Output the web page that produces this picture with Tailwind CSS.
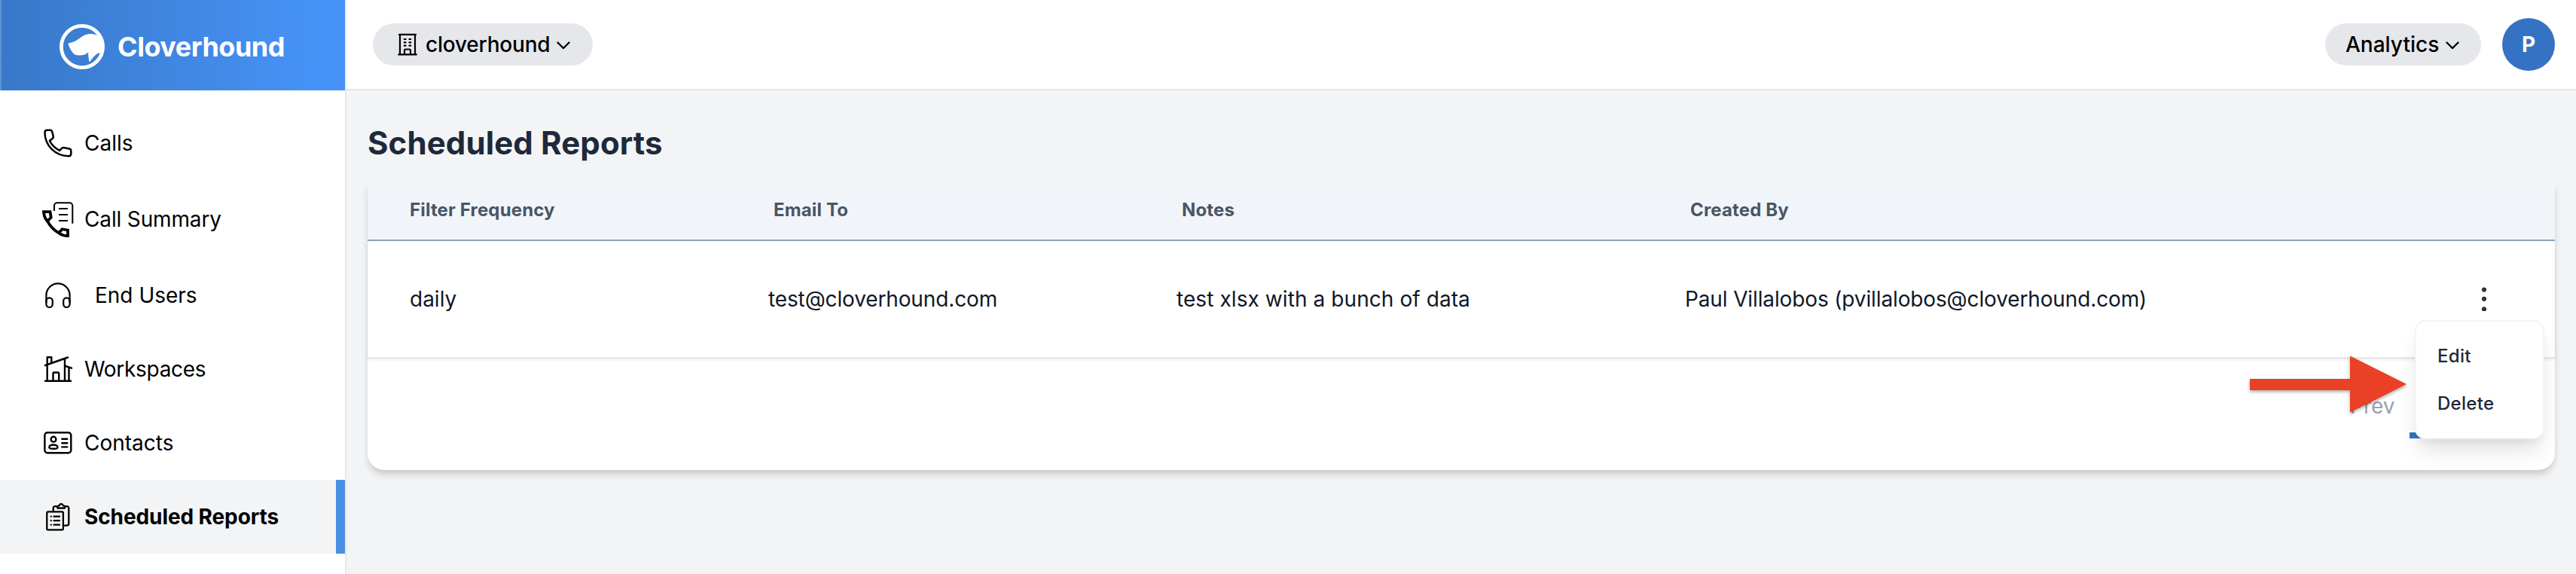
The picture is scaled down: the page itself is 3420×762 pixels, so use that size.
<!DOCTYPE html>
<html lang="en">
<head>
    <meta charset="UTF-8">
    <meta name="viewport" content="width=device-width, initial-scale=1.0">
    <title>Scheduled Reports - Cloverhound</title>
    <script src="https://cdn.jsdelivr.net/npm/@tailwindcss/browser@4"></script>
</head>
<body class="bg-gray-100 font-['Inter',sans-serif] text-black">

    <div class="flex h-[762px] overflow-hidden">

        <!-- Sidebar -->
        <aside class="w-[460px] shrink-0 bg-white border-r-2 border-gray-200">
            <div class="h-[120px] flex items-center pt-1 pl-[77px] gap-[17px] border-l-2 border-[#5c93d6] bg-linear-to-r from-[#3878c8] to-[#4692f6] to-90%">
                <svg class="w-[60px] h-[60px] shrink-0" viewBox="0 0 60 60" fill="none">
                    <circle cx="30" cy="30" r="27.6" stroke="#fff" stroke-width="4.8" />
                    <path fill="#fff" d="M11.700 26.500c-.2-1 .5-1.500 1.800-1.600C22 24 27 17.500 33 14.800c6-2.600 14-2.300 19 1.200l5 14-2.700 8c-4.800.6-8.800 4.500-12.800 10.500-1 1.500-2 2-2.200.5-.6-4-1.400-8-1.100-11.700-3 3.300-7 4.300-12 4.300-4.500 0-7-1.400-9.200-4.300C14.500 34 13 30.500 11.700 26.500z" />
                </svg>
                <span class="text-4xl font-bold tracking-[-0.5px] text-white">Cloverhound</span>
            </div>

            <nav class="pt-[21px] text-[28px]">
                <a class="flex items-center h-[98px] pl-[57px] gap-[15px]">
                    <svg class="w-10 h-10 shrink-0" fill="none" stroke="currentColor" stroke-width="2.500" viewBox="0 0 40 40">
                        <path stroke-linejoin="round" d="M5.500 2.700h4.200c1.300 0 2.200.7 2.500 2l1.500 6c.4 1.400 0 2.500-1 3.300l-3.800 2.800c2.600 5.600 7 10 13.200 13.100l2.600-2.800c.8-1 1.800-1.400 3.100-1.100l7.300 1.500c1.400.3 2.200 1.200 2.200 2.600v4.200c0 1.800-1.100 2.900-2.900 2.900C16.500 37.200 2.500 23.500 2.500 5.800c0-1.800 1.200-3.100 3-3.100z" />
                    </svg>
                    <span>Calls</span>
                </a>
                <a class="flex items-center h-[104px] pl-[57px] gap-[15px]">
                    <svg class="w-10 h-10 shrink-0 overflow-visible" fill="none" stroke="currentColor" stroke-width="2" viewBox="0 0 40 40">
                        <path d="M15 9V2.300a4 4 0 0 1 4-4h16.300a4 4 0 0 1 4 4v23.400M21 6h12M21 14h12M21 22h12" />
                        <path stroke-width="3.800" d="M1 10.200h8.500l1.200 7.500-4.700 5C3 19.500 1.200 15 1 10.200zM6 22.700c3.500 6.500 8.500 12 15 15.500M21 38.200l4.500-5 7.500 1.300v7.700c-4.500 0-8.500-1.500-12-4z" />
                    </svg>
                    <span class="tracking-[-0.15px]">Call Summary</span>
                </a>
                <a class="flex items-center h-[98px] pl-[57px] gap-[29px]">
                    <svg class="w-10 h-10 shrink-0" fill="none" stroke="currentColor" stroke-width="2.200" viewBox="0 0 40 40">
                        <path d="M4.400 30V20a15.600 15.600 0 0 1 31.200 0v10" />
                        <rect x="4.400" y="23.400" width="8.400" height="12.600" rx="4.200" />
                        <rect x="27.200" y="23.400" width="8.400" height="12.600" rx="4.200" />
                    </svg>
                    <span>End Users</span>
                </a>
                <a class="flex items-center h-[98px] pl-[57px] gap-[15px]">
                    <svg class="w-10 h-10 shrink-0" fill="none" stroke="currentColor" stroke-width="2.400" stroke-linecap="round" stroke-linejoin="round" viewBox="0 0 40 40">
                        <path d="M3 15L33 4.500M5.700 14V4.300h5.600v7.500M5.700 14v21.700M29 6v29.700M30 16l8 2.700M34.500 18v17.700M3 35.700h34M13.500 35.700V26a1.500 1.500 0 0 1 1.500-1.500h4.700a1.500 1.500 0 0 1 1.500 1.500v9.700" />
                    </svg>
                    <span class="tracking-[-0.3px]">Workspaces</span>
                </a>
                <a class="flex items-center h-[98px] pl-[57px] gap-[15px]">
                    <svg class="w-10 h-10 shrink-0" fill="none" stroke="currentColor" stroke-width="2.400" stroke-linecap="round" viewBox="0 0 40 40">
                        <rect x="2.400" y="6.300" width="34.900" height="27" rx="3.500" />
                        <circle cx="14" cy="15.200" r="3.400" />
                        <path d="M8.300 26c0-2.200 2.500-3.500 5.600-3.500s5.600 1.300 5.600 3.500c0 1.300-2.500 1.800-5.600 1.800S8.300 27.300 8.300 26zM25.300 14.700h7M25.300 20.200h7M25.300 25.400h7" />
                    </svg>
                    <span>Contacts</span>
                </a>
                <a class="flex items-center h-[98px] pl-[57px] gap-[15px] bg-gray-100 border-r-12 border-[#4a90e2]">
                    <svg class="w-10 h-10 shrink-0" fill="none" stroke="currentColor" stroke-width="2.300" stroke-linecap="round" stroke-linejoin="round" viewBox="0 0 40 40">
                        <rect x="5.300" y="13.300" width="21.600" height="24" rx="1.500" />
                        <path d="M13.700 13V8.700a2.600 2.600 0 0 1 2.600-2.600h3M29 6.100h2.700a2.600 2.600 0 0 1 2.600 2.600v20.400a2.600 2.600 0 0 1-2.600 2.600H27" />
                        <path d="M19.400 8.500c-.5-2.300.5-3.300 2.200-3.400.6-1.500 1.400-2.100 2.600-2.100s2 .6 2.600 2.100c1.700.1 2.700 1.100 2.200 3.400z" />
                        <path d="M10.700 19.700h.1M10.700 25.200h.1M10.700 30.700h.1M14.500 19.700h7.500M14.500 25.200h7.500M14.500 30.700h7.500" />
                    </svg>
                    <span class="font-bold tracking-[-0.1px]">Scheduled Reports</span>
                </a>
            </nav>
        </aside>

        <div class="flex-1 flex flex-col">
            <!-- Top bar -->
            <header class="h-[120px] shrink-0 flex items-center justify-between pl-[35px] pr-7 bg-white border-b-2 border-gray-200 text-[28px] font-medium">
                <button class="w-[292px] h-14 flex items-center pl-[33px] rounded-full bg-gray-200">
                    <svg class="w-[26px] h-[30px] shrink-0" fill="none" stroke="currentColor" stroke-width="2.200" stroke-linecap="round" viewBox="0 0 26 30">
                        <path d="M2 1.900h22M1.200 28.400h23.600M3 2v26M23 2v26M9 28v-5a1.500 1.500 0 0 1 1.500-1.500h5A1.500 1.500 0 0 1 17 23v5M8.800 8h1.800M15.400 8h1.800M8.800 12.300h1.800M15.400 12.300h1.800M8.800 16.600h1.800M15.400 16.600h1.800" />
                    </svg>
                    <span class="ml-[11px] tracking-[-0.2px]">cloverhound</span>
                    <svg class="ml-[9px] mt-0.5 w-[18px] h-[11px]" fill="none" stroke="currentColor" stroke-width="2.400" stroke-linecap="round" stroke-linejoin="round" viewBox="0 0 18 11">
                        <path d="M1.500 1.500L9 9l7.500-7.500" />
                    </svg>
                </button>
                <div class="flex items-center gap-7">
                    <button class="w-[207px] h-14 flex items-center pl-[27px] rounded-full bg-gray-200">
                        <span>Analytics</span>
                        <svg class="ml-[9px] mt-[3px] w-[18px] h-[11px]" fill="none" stroke="currentColor" stroke-width="2.400" stroke-linecap="round" stroke-linejoin="round" viewBox="0 0 18 11">
                            <path d="M1.500 1.500L9 9l7.500-7.500" />
                        </svg>
                    </button>
                    <div class="w-[70px] h-[70px] flex items-center justify-center rounded-full bg-[#3572c4] text-white font-bold">P</div>
                </div>
            </header>

            <main class="relative px-7 pt-[46px]">
                <h1 class="h-[73px] text-[42px] leading-[48px] font-bold tracking-[0.12px] text-gray-800">Scheduled Reports</h1>

                <div class="h-[385px] rounded-b-[22px] bg-white shadow-[0_8px_12px_-2px_rgba(0,0,0,0.12),0_4px_8px_-2px_rgba(0,0,0,0.1)]">
                    <div class="grid grid-cols-[479px_542px_675px_1fr] h-[81px] pt-6 pl-14 bg-slate-100 border-b-2 border-slate-400 text-2xl font-bold tracking-[0.15px] text-gray-600">
                        <div>Filter Frequency</div>
                        <div class="pl-1">Email To</div>
                        <div class="pl-1">Notes</div>
                        <div class="pl-1">Created By</div>
                    </div>
                    <div class="grid grid-cols-[476px_542px_675px_1fr_101px] items-center h-[156px] pl-14 border-b-2 border-gray-200 text-[28px] text-gray-900 shadow-[0_2px_4px_0_rgba(0,0,0,0.08)]">
                        <div>daily</div>
                        <div class="tracking-[-0.13px]">test@cloverhound.com</div>
                        <div class="tracking-[0.08px]">test xlsx with a bunch of data</div>
                        <div class="tracking-[-0.13px]">Paul Villalobos (pvillalobos@cloverhound.com)</div>
                        <svg class="w-2 h-8 ml-[3px]" viewBox="0 0 8 32" fill="#333">
                            <circle cx="4" cy="3.500" r="3.100" />
                            <circle cx="4" cy="15.800" r="3.100" />
                            <circle cx="4" cy="29.400" r="3.100" />
                        </svg>
                    </div>
                    <div class="flex justify-end items-start pt-[42px] pr-[112px] text-[28px] text-gray-400">
                        <span class="w-20">Prev</span>
                        <span class="w-[81px] -ml-px h-16 border-b-8 border-[#3572c4]"></span>
                    </div>
                </div>

                <!-- Row menu -->
                <div class="absolute right-[42px] top-[305px] w-[172px] h-[158px] pl-7 pt-[30px] rounded-[14px] border-2 border-gray-100 bg-white text-2xl font-medium tracking-[0.3px] text-gray-800 shadow-[0_20px_30px_-6px_rgba(0,0,0,0.12),0_8px_12px_-4px_rgba(0,0,0,0.06)]">
                    <div class="h-[63px]">Edit</div>
                    <div>Delete</div>
                </div>

                <svg class="absolute right-[217px] top-[346px] w-[220px] h-[88px] drop-shadow-[0_2px_2px_rgba(0,0,0,0.35)]" viewBox="0 0 220 88" fill="#ea4025">
                    <path d="M4 37h133V6.500L212 44l-75 37.500V52H4z" />
                </svg>
            </main>
        </div>
    </div>

</body>
</html>
